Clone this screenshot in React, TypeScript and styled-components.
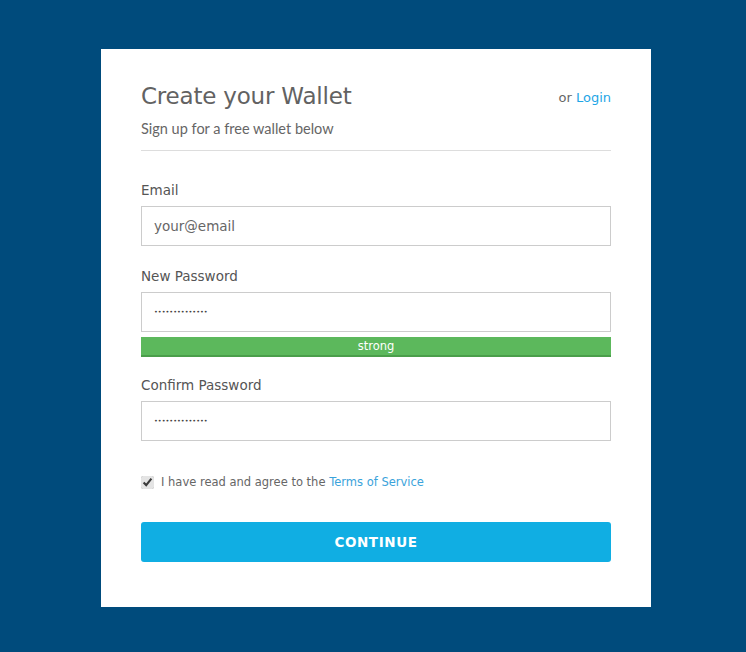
import React from 'react'
import styled, { createGlobalStyle } from 'styled-components'

const Global = createGlobalStyle`
  html, body {
    margin: 0;
    background: #004b7c;
    font-family: "Open Sans", "Liberation Sans", sans-serif;
  }
`

const Page = styled.div`
  padding: 49px 0 45px 101px;
`

const Card = styled.div`
  width: 470px;
  background: #fff;
  padding: 31px 40px 45px;
  display: flex;
  flex-direction: column;
`

const Header = styled.div`
  display: flex;
  justify-content: space-between;
  align-items: flex-start;
  border-bottom: 1px solid #ddd;
  padding-bottom: 13px;
`

const Title = styled.h1`
  margin: 0;
  font-family: "DejaVu Sans", sans-serif;
  font-weight: 400;
  font-size: 23px;
  line-height: 32px;
  color: #626262;
  letter-spacing: -0.2px;
`

const Sub = styled.p`
  margin: 8px 0 0;
  font-family: "Lato", sans-serif;
  font-size: 14.5px;
  color: #666;
  font-weight: 400;
`

const LoginLine = styled.div`
  margin-top: 10px;
  font-size: 13px;
  color: #666;
  font-family: "DejaVu Sans", sans-serif;
  a {
    color: #1ea6e6;
    text-decoration: none;
  }
`

const Field = styled.div<{ $top: number }>`
  margin-top: ${p => p.$top}px;
  display: flex;
  flex-direction: column;
`

const Label = styled.label`
  font-family: "DejaVu Sans", sans-serif;
  font-size: 13.5px;
  color: #555;
  line-height: 18px;
  margin-bottom: 7px;
`

const Input = styled.input`
  box-sizing: border-box;
  height: 40px;
  width: 100%;
  border: 1px solid #ccc;
  padding: 0 12px;
  font-family: "DejaVu Sans", sans-serif;
  font-size: 13.5px;
  color: #555;
  outline: none;
  &::placeholder {
    color: #666;
  }
  &[type='password'] {
    font-size: 6.5px;
    color: #444;
  }
`

const Strength = styled.div`
  margin-top: 5px;
  height: 18px;
  background: #5cb85c;
  border-bottom: 2px solid #4a9e4a;
  color: #fff;
  font-family: "DejaVu Sans", sans-serif;
  font-size: 11.5px;
  line-height: 18px;
  text-align: center;
`

const Agree = styled.label`
  margin-top: 34px;
  display: flex;
  align-items: center;
  gap: 7px;
  font-family: "DejaVu Sans", sans-serif;
  font-size: 11.5px;
  color: #666;
  input {
    margin: 0;
    width: 13px;
    height: 13px;
    accent-color: #e4e4e4;
  }
  a {
    color: #3aa3db;
    text-decoration: none;
  }
`

const Button = styled.button`
  margin-top: 33px;
  height: 40px;
  border: none;
  border-radius: 3px;
  background: #10aee3;
  color: #fff;
  font-family: "DejaVu Sans", sans-serif;
  font-weight: 700;
  font-size: 13.5px;
  letter-spacing: 0.6px;
`

export default function App() {
  return (
    <Page>
      <Global />
      <Card>
        <Header>
          <div>
            <Title>Create your Wallet</Title>
            <Sub>Sign up for a free wallet below</Sub>
          </div>
          <LoginLine>
            or <a href="#">Login</a>
          </LoginLine>
        </Header>
        <Field $top={30}>
          <Label>Email</Label>
          <Input placeholder="your@email" />
        </Field>
        <Field $top={21}>
          <Label>New Password</Label>
          <Input type="password" defaultValue="aaaaaaaaaaaaaa" />
          <Strength>strong</Strength>
        </Field>
        <Field $top={19}>
          <Label>Confirm Password</Label>
          <Input type="password" defaultValue="aaaaaaaaaaaaaa" />
        </Field>
        <Agree>
          <input type="checkbox" defaultChecked />
          <span>
            I have read and agree to the <a href="#">Terms of Service</a>
          </span>
        </Agree>
        <Button>CONTINUE</Button>
      </Card>
    </Page>
  )
}
